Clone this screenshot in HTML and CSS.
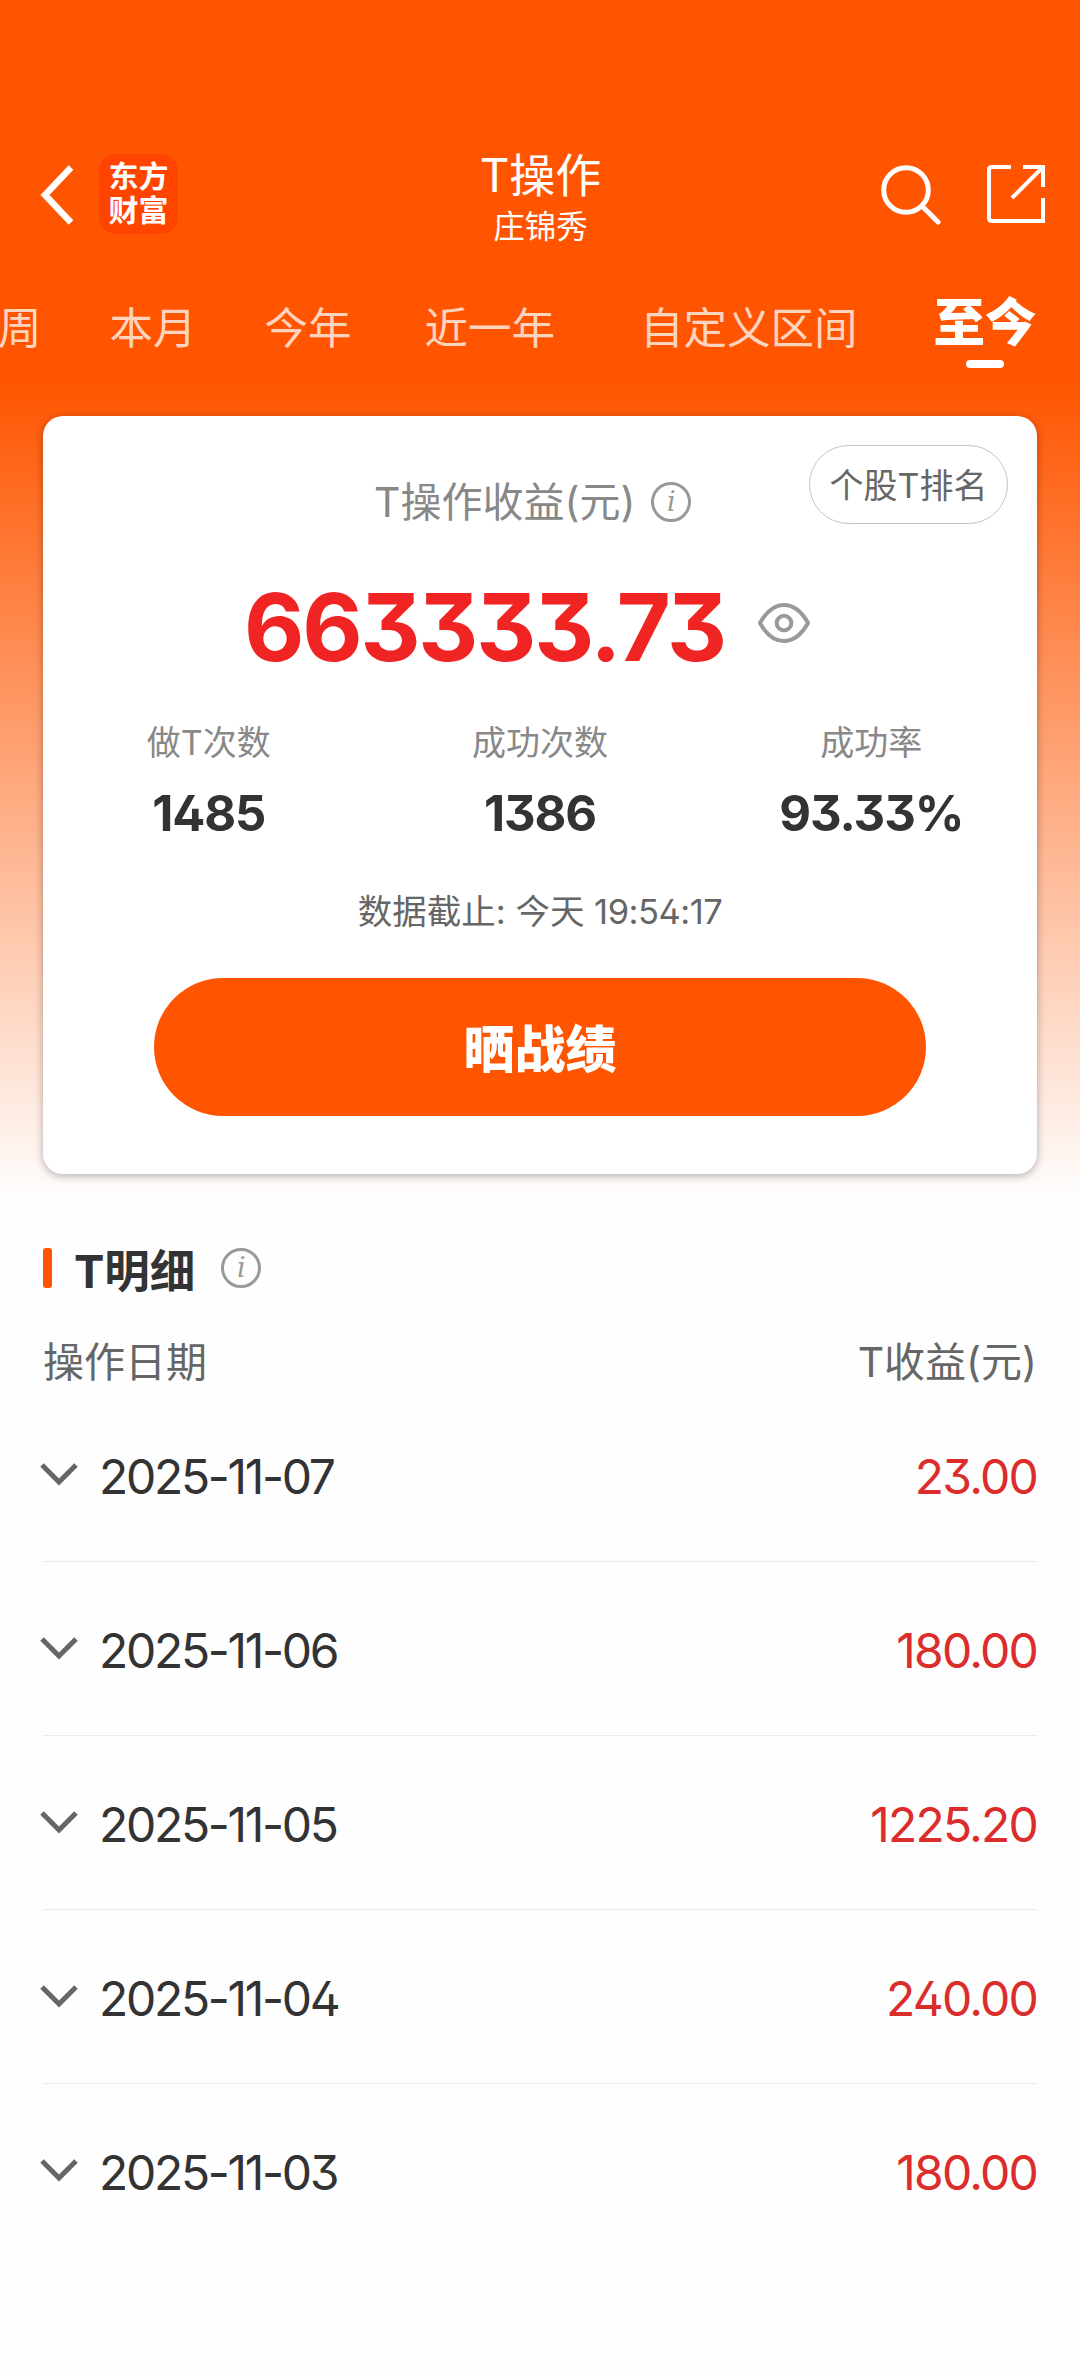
FILE: index.html
```html
<!DOCTYPE html>
<html lang="zh-CN">
<head>
    <meta charset="UTF-8">
    <meta name="viewport" content="width=device-width, initial-scale=1.0">
    <title>T操作</title>
    <link rel="stylesheet" href="styles.css">
</head>
<body>

    <div class="hero">
        <header class="navbar">
            <div class="nav-left">
                <svg class="back" width="34" height="60" viewBox="0 0 34 60" fill="none" stroke="#fff" stroke-width="6.5">
                    <path d="M31 2.5 L5 30 L31 57.5"/>
                </svg>
                <div class="logo"><span>东方</span><span>财富</span></div>
            </div>
            <div class="nav-title">
                <h1>T操作</h1>
                <p>庄锦秀</p>
            </div>
            <div class="nav-right">
                <svg width="60" height="60" viewBox="0 0 60 60" fill="none" stroke="#fff" stroke-width="5">
                    <circle cx="25" cy="25" r="22.3"/>
                    <path d="M41 41 L57 57" stroke-linecap="round"/>
                </svg>
                <svg width="58" height="58" viewBox="0 0 58 58" fill="none" stroke="#fff" stroke-width="4">
                    <path d="M24 2 H5 Q2 2 2 5 V53 Q2 56 5 56 H56 V33"/>
                    <path d="M36 2 H56 V22"/>
                    <path d="M25 33 L55 3"/>
                </svg>
            </div>
        </header>

        <nav class="tabs">
            <a class="tab tab-week">周</a>
            <a class="tab tab-month">本月</a>
            <a class="tab tab-year">今年</a>
            <a class="tab tab-last">近一年</a>
            <a class="tab tab-custom">自定义区间</a>
            <a class="tab active">至今</a>
        </nav>

        <section class="card">
            <a class="rank">个股T排名</a>
            <div class="profit-label">
                <span>T操作收益(元)</span>
                <i class="info">i</i>
            </div>
            <div class="profit">
                <strong>663333.73</strong>
                <svg width="52" height="40" viewBox="0 0 52 40" fill="none" stroke="#999" stroke-width="4">
                    <path d="M2 20 Q12 2 26 2 T50 20 Q40 38 26 38 T2 20 Z" stroke-linejoin="round"/>
                    <circle cx="26" cy="20" r="7.3"/>
                </svg>
            </div>
            <div class="stats">
                <div class="stat"><span>做T次数</span><b>1485</b></div>
                <div class="stat"><span>成功次数</span><b>1386</b></div>
                <div class="stat"><span>成功率</span><b>93.33%</b></div>
            </div>
            <p class="deadline">数据截止: 今天 <span>19:54:17</span></p>
            <button class="share">晒战绩</button>
        </section>
    </div>

    <section class="detail">
        <div class="detail-title">
            <h2>T明细</h2>
            <i class="info">i</i>
        </div>
        <div class="detail-head">
            <span>操作日期</span>
            <span>T收益(元)</span>
        </div>
        <ul class="rows">
            <li>
                <svg class="chevron" width="38" height="24" viewBox="0 0 38 24"><path d="M2 2 L19 19 L36 2"/></svg>
                <span class="date">2025-11-07</span>
                <span class="amount">23.00</span>
            </li>
            <li>
                <svg class="chevron" width="38" height="24" viewBox="0 0 38 24"><path d="M2 2 L19 19 L36 2"/></svg>
                <span class="date">2025-11-06</span>
                <span class="amount">180.00</span>
            </li>
            <li>
                <svg class="chevron" width="38" height="24" viewBox="0 0 38 24"><path d="M2 2 L19 19 L36 2"/></svg>
                <span class="date">2025-11-05</span>
                <span class="amount">1225.20</span>
            </li>
            <li>
                <svg class="chevron" width="38" height="24" viewBox="0 0 38 24"><path d="M2 2 L19 19 L36 2"/></svg>
                <span class="date">2025-11-04</span>
                <span class="amount">240.00</span>
            </li>
            <li>
                <svg class="chevron" width="38" height="24" viewBox="0 0 38 24"><path d="M2 2 L19 19 L36 2"/></svg>
                <span class="date">2025-11-03</span>
                <span class="amount">180.00</span>
            </li>
        </ul>
    </section>

</body>
</html>
```
FILE: styles.css
```css
* {
    box-sizing: border-box;
    margin: 0;
    padding: 0;
}

body {
    background: #fefefe;
    color: #333;
    font-family: Inter, "Noto Sans CJK SC", sans-serif;
    font-feature-settings: "cv02", "cv09"; /* open four, flat-top three */
    min-height: 2376px;
    overflow-x: hidden;
}

.hero {
    height: 1210px;
    padding-top: 144px;
    background: linear-gradient(#ff5500 0, #ff5500 380px, #fefefe 1200px);
}

/* top bar */
.navbar {
    display: grid;
    grid-template-columns: 1fr auto 1fr;
    height: 110px;
    padding: 0 35px 0 40px;
    color: #fff;
}

.nav-left {
    display: flex;
    align-items: flex-start;
    gap: 25px;
}

.back {
    margin-top: 21px;
}

.logo {
    display: flex;
    flex-direction: column;
    align-items: center;
    width: 79px;
    height: 80px;
    margin-top: 10px;
    padding-top: 5px;
    border-radius: 17px;
    background: #ff4400;
    font-size: 30px;
    font-weight: 700;
    line-height: 34px;
}

.nav-title {
    margin-left: -4px;
    text-align: center;
}

.nav-title h1 {
    padding-top: 1px;
    font-size: 46px;
    font-weight: 400;
    line-height: 60px;
}

.nav-title p {
    font-size: 31.5px;
    line-height: 44px;
}

.nav-right {
    display: flex;
    justify-content: flex-end;
    gap: 46px;
    padding-top: 21px;
}

/* period tabs */
.tabs {
    display: flex;
    height: 162px;
    padding-top: 45px;
    white-space: nowrap;
}

.tab {
    flex: none;
    color: rgba(255, 255, 255, 0.75);
    font-size: 43.5px;
    line-height: 59px;
}

.tab-week {
    margin-left: -2px;
    margin-right: 68px;
}

.tab-month {
    margin-right: 68px;
}

.tab-year {
    margin-right: 73px;
}

.tab-last {
    margin-right: 85px;
}

.tab-custom {
    margin-right: 76px;
}

.tab.active {
    color: #fff;
    font-size: 51.5px;
    font-weight: 900;
    line-height: 46px;
}

.tab.active::after {
    content: "";
    display: block;
    width: 38px;
    height: 8px;
    margin: 15px auto 0;
    border-radius: 4px;
    background: #fff;
}

/* summary card */
.card {
    position: relative;
    width: 994px;
    height: 758px;
    margin: 0 auto;
    padding-top: 56px;
    border-radius: 20px;
    background: #fff;
    box-shadow: 0 2px 8px rgba(0, 0, 0, 0.3);
}

.rank {
    position: absolute;
    top: 29px;
    right: 29px;
    width: 199px;
    height: 79px;
    border: 1.5px solid #c4c4c4;
    border-radius: 40px;
    color: #666;
    font-size: 34px;
    line-height: 80px;
    text-align: center;
}

.info {
    flex: none;
    width: 40px;
    height: 40px;
    border: 3px solid #999;
    border-radius: 50%;
    color: #999;
    font: italic 27px/33px "DejaVu Serif", serif;
    text-align: center;
}

.profit-label {
    display: flex;
    align-items: center;
    height: 60px;
    padding-left: 331px;
    gap: 16px;
    color: #888;
    font-size: 41px;
}

.profit-label span {
    line-height: 60px;
}

.profit {
    display: flex;
    align-items: center;
    height: 100px;
    margin-top: 41px;
    padding-left: 201px;
    gap: 33px;
}

.profit strong {
    padding-top: 7px;
    color: #f12424;
    font-size: 93px;
    font-weight: 700;
    letter-spacing: -2.2px;
}

.stats {
    display: flex;
    margin-top: 42px;
}

.stat {
    display: flex;
    flex: 1;
    flex-direction: column;
    align-items: center;
}

.stat span {
    color: #888;
    font-size: 34px;
    line-height: 56px;
}

.stat b {
    font-size: 49px;
    letter-spacing: -1.1px;
    line-height: 85px;
}

.deadline {
    margin-top: 26px;
    color: #666;
    font-size: 34.5px;
    line-height: 60px;
    text-align: center;
}

.deadline span {
    letter-spacing: -0.5px;
}

.share {
    display: block;
    width: 772px;
    height: 138px;
    margin: 36px auto 0;
    padding-bottom: 3px;
    border: none;
    border-radius: 69px;
    background: #ff5500;
    color: #fff;
    font-family: inherit;
    font-size: 51px;
    font-weight: 900;
}

/* detail list */
.detail {
    padding: 28px 43px 0;
}

.detail-title {
    display: flex;
    align-items: center;
    height: 60px;
}

.detail-title::before {
    content: "";
    width: 9px;
    height: 40px;
    margin-right: 22px;
    border-radius: 3px;
    background: #ff5500;
}

.detail-title h2 {
    margin-right: 26px;
    font-size: 45.5px;
    font-weight: 700;
}

.detail-head {
    display: flex;
    justify-content: space-between;
    height: 60px;
    margin-top: 34px;
    color: #666;
    font-size: 41px;
    line-height: 60px;
}

.rows {
    margin-top: -4px;
    list-style: none;
}

.rows li {
    display: flex;
    align-items: center;
    height: 174px;
    border-bottom: 1px solid #ececec;
    font-size: 48px;
}

.rows li:last-child {
    border-bottom-color: transparent;
}

.chevron {
    margin: 0 21px 0 -3px;
    fill: none;
    stroke: #666;
    stroke-width: 5;
}

.date {
    padding-top: 3px;
    letter-spacing: -2.3px;
}

.amount {
    margin-left: auto;
    padding-top: 3px;
    color: #db2d2b;
    letter-spacing: -1.8px;
}
```
